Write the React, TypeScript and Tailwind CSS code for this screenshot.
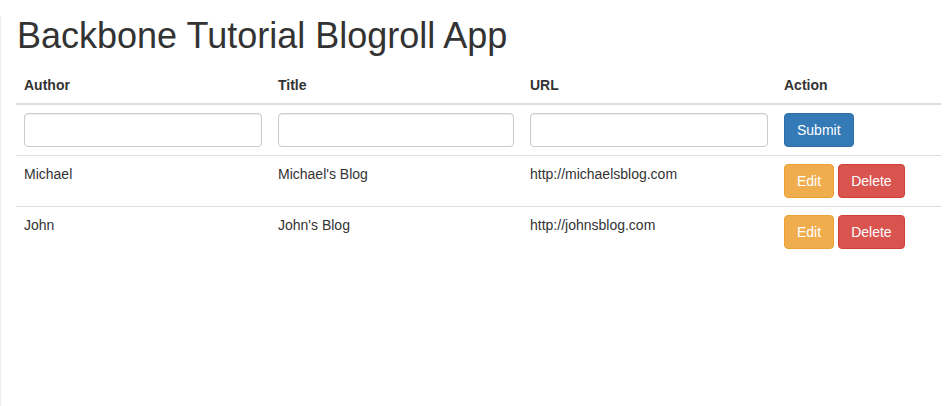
import React, { useState } from "react";

interface Blog {
  id: number;
  author: string;
  title: string;
  url: string;
}

const initialBlogs: Blog[] = [
  { id: 1, author: "Michael", title: "Michael's Blog", url: "http://michaelsblog.com" },
  { id: 2, author: "John", title: "John's Blog", url: "http://johnsblog.com" },
];

const inputClass =
  "block w-full h-[34px] px-3 py-1.5 text-[14px] text-[#555] bg-white border border-[#ccc] rounded-[4px] shadow-[inset_0_1px_1px_rgba(0,0,0,0.075)] outline-none";

const App: React.FC = () => {
  const [blogs] = useState<Blog[]>(initialBlogs);

  return (
    <div
      className="min-h-screen bg-white border-l border-[#eee] pl-[15px] pr-[7px] text-[14px] leading-[20px] text-[#333]"
      style={{ fontFamily: '"Liberation Sans", Arial, Helvetica, sans-serif' }}
    >
      <h1 className="text-[36px] leading-[1.1] font-normal mt-[16px] mb-[11px] pl-px">
        Backbone Tutorial Blogroll App
      </h1>

      <table className="w-full border-collapse">
        <thead>
          <tr>
            <th className="w-[254px] p-2 text-left font-bold border-b-2 border-[#ddd]">Author</th>
            <th className="w-[252px] p-2 text-left font-bold border-b-2 border-[#ddd]">Title</th>
            <th className="w-[254px] p-2 text-left font-bold border-b-2 border-[#ddd]">URL</th>
            <th className="p-2 text-left font-bold border-b-2 border-[#ddd]">Action</th>
          </tr>
        </thead>
        <tbody>
          {/* New blog form row */}
          <tr>
            <td className="p-2 align-top">
              <input className={inputClass} />
            </td>
            <td className="p-2 align-top">
              <input className={inputClass} />
            </td>
            <td className="p-2 align-top">
              <input className={inputClass} />
            </td>
            <td className="p-2 align-top">
              <button className="px-3 py-1.5 text-[14px] leading-[20px] text-white bg-[#337ab7] border border-[#2e6da4] rounded-[4px]">
                Submit
              </button>
            </td>
          </tr>

          {blogs.map((blog) => (
            <tr key={blog.id}>
              <td className="p-2 align-top border-t border-[#ddd]">{blog.author}</td>
              <td className="p-2 align-top border-t border-[#ddd]">{blog.title}</td>
              <td className="p-2 align-top border-t border-[#ddd]">{blog.url}</td>
              <td className="p-2 align-top border-t border-[#ddd]">
                <div className="flex gap-1">
                  <button className="px-3 py-1.5 text-[14px] leading-[20px] text-white bg-[#f0ad4e] border border-[#eea236] rounded-[4px]">
                    Edit
                  </button>
                  <button className="px-3 py-1.5 text-[14px] leading-[20px] text-white bg-[#d9534f] border border-[#d43f3a] rounded-[4px]">
                    Delete
                  </button>
                </div>
              </td>
            </tr>
          ))}
        </tbody>
      </table>
    </div>
  );
};

export default App;
